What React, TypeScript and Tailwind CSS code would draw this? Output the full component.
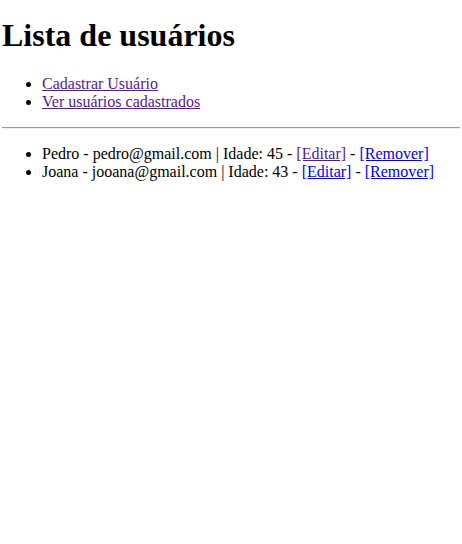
const users = [
  { nome: "Pedro", email: "pedro@gmail.com", idade: 45, editado: true },
  { nome: "Joana", email: "jooana@gmail.com", idade: 43, editado: false },
];

export default function App() {
  return (
    <div className="min-h-[544px] bg-white px-[2px] text-[16px] leading-normal text-black font-['Liberation_Serif','Times_New_Roman',serif]">
      <div className="h-[17px]" />
      <h1 className="mb-[21px] text-[32px] font-bold leading-[37px]">Lista de usuários</h1>

      <ul className="mb-[15px] list-disc pl-10 leading-[18.4px]">
        <li>
          <a href="#" className="text-[#551a8b] underline">Cadastrar Usuário</a>
        </li>
        <li>
          <a href="#" className="text-[#551a8b] underline">Ver usuários cadastrados</a>
        </li>
      </ul>

      <hr className="border-t border-b border-t-[#9a9a9a] border-b-[#eeeeee]" />

      <ul className="mt-4 list-disc pl-10 leading-[18.4px]">
        {users.map((u) => (
          <li key={u.email}>
            {u.nome} - {u.email} | Idade: {u.idade} -{" "}
            <a href="#" className={u.editado ? "text-[#551a8b] underline" : "text-[#0000ee] underline"}>
              [Editar]
            </a>{" "}
            -{" "}
            <a href="#" className="text-[#0000ee] underline">
              [Remover]
            </a>
          </li>
        ))}
      </ul>
    </div>
  );
}
